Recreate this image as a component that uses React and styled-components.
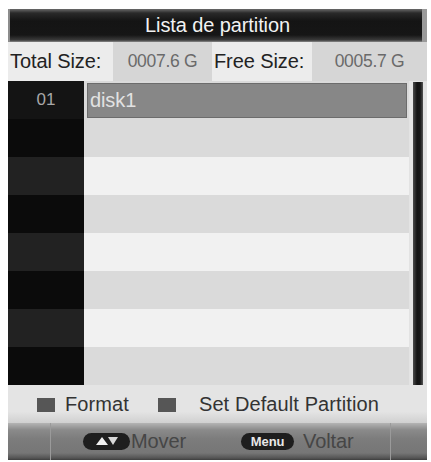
import React from "react";
import styled, { createGlobalStyle } from "styled-components";

const Global = createGlobalStyle`
  html, body { margin: 0; padding: 0; background: #ffffff; }
  body { font-family: "Liberation Sans", Arial, sans-serif; }
`;

const Frame = styled.div`
  margin: 9px 0 0 8px;
  width: 419px;
  background: #e3e3e3;
  display: flex;
  flex-direction: column;
`;

const TitleBar = styled.div`
  height: 33px;
  display: flex;
  align-items: center;
  justify-content: center;
  background: linear-gradient(to bottom, #6a6a6a 0px, #2a2a2a 4px, #141414 12px, #161616 26px, #3a3a3a 31px, #8a8a8a 33px);
  box-shadow: inset 2px 0 0 #8c8c8c, inset -5px 0 0 #9a9a9a;
  color: #f2f2f2;
  font-size: 20px;
  letter-spacing: -0.1px;
`;

const SizeRow = styled.div`
  height: 39px;
  display: grid;
  grid-template-columns: 105px 99px 100px 115px;
`;

const SizeCell = styled.div`
  display: flex;
  align-items: center;
  justify-content: ${(p) => (p.$value ? "center" : "flex-start")};
  padding-left: ${(p) => (p.$value ? "0" : "2px")};
  background: ${(p) => (p.$value ? "#d6d6d6" : "#ececec")};
  color: ${(p) => (p.$value ? "#6a6a6a" : "#222")};
  font-size: ${(p) => (p.$value ? "17.5px" : "20px")};
  letter-spacing: ${(p) => (p.$value ? "-0.3px" : "-0.1px")};
`;

const ListArea = styled.div`
  display: flex;
  height: 304px;
`;

const IndexCol = styled.div`
  width: 76px;
  display: flex;
  flex-direction: column;
`;

const IndexCell = styled.div`
  height: 38px;
  display: flex;
  align-items: center;
  justify-content: center;
  background: ${(p) => p.$bg};
  color: #a8a8a8;
  font-size: 17px;
`;

const RowsCol = styled.div`
  width: 325px;
  display: flex;
  flex-direction: column;
`;

const Row = styled.div`
  height: 38px;
  box-sizing: border-box;
  background: ${(p) => p.$bg};
  padding: 2px 2px 1px 3px;
  display: flex;
`;

const Selected = styled.div`
  flex: 1;
  background: #878787;
  border: 1px solid #6c6c6c;
  display: flex;
  align-items: center;
  padding-left: 2px;
  color: #e2e2e2;
  font-size: 20px;
  letter-spacing: -0.1px;
`;

const ScrollTrack = styled.div`
  width: 18px;
  display: flex;
  justify-content: center;
  padding-top: 1px;
  box-sizing: border-box;
`;

const ScrollBar = styled.div`
  width: 10px;
  background: linear-gradient(to right, #4a4a4a, #121212 40%, #151515 70%, #555);
`;

const Legend = styled.div`
  height: 38px;
  display: flex;
  align-items: center;
  padding-left: 29px;
  color: #333;
  font-size: 20px;
  letter-spacing: 0.1px;
  background: linear-gradient(to bottom, #e4e4e4 0%, #e4e4e4 70%, #d0d0d0 100%);
`;

const LegendSquare = styled.span`
  width: 18px;
  height: 14px;
  background: #565656;
  margin-right: ${(p) => p.$gap}px;
  margin-top: 1px;
`;

const LegendText = styled.span`
  margin-right: ${(p) => p.$gap || 0}px;
`;

const BottomBar = styled.div`
  height: 37px;
  display: flex;
  background: linear-gradient(to bottom, #b4b4b4 0px, #8a8a8a 7px, #7c7c7c 16px, #767676 30px, #555 35px, #3e3e3e 37px);
`;

const BarEdge = styled.div`
  width: ${(p) => p.$w}px;
  border-${(p) => p.$side}: 1px solid #9a9a9a;
`;

const BarMiddle = styled.div`
  flex: 1;
  display: flex;
  align-items: center;
  padding-left: 32px;
  padding-bottom: 1px;
  color: #464646;
  font-size: 20px;
  letter-spacing: -0.1px;
`;

const Pill = styled.span`
  height: 17px;
  width: ${(p) => p.$w}px;
  border-radius: 9px;
  background: #1e1e1e;
  display: inline-flex;
  align-items: center;
  justify-content: center;
  color: #e8e8e8;
  font-size: 13px;
  font-weight: bold;
  margin-right: ${(p) => p.$gap}px;
`;

const BarText = styled.span`
  margin-right: ${(p) => p.$gap || 0}px;
`;

const Arrows = () => (
  <svg width="26" height="12" viewBox="0 0 26 12">
    <polygon points="2,10 8,2 14,10" fill="#f0f0f0" />
    <polygon points="14,2 24,2 19,10" fill="#d8d8d8" />
  </svg>
);

const indexBg = ["#141414", "#0b0b0b", "#222", "#0b0b0b", "#222", "#0b0b0b", "#222", "#0b0b0b"];
const rowBg = ["#dadada", "#dadada", "#f1f1f1", "#dadada", "#f1f1f1", "#dadada", "#f1f1f1", "#dadada"];

export default function App() {
  return (
    <>
      <Global />
      <Frame>
        <TitleBar>Lista de partition</TitleBar>
        <SizeRow>
          <SizeCell>Total Size:</SizeCell>
          <SizeCell $value>0007.6 G</SizeCell>
          <SizeCell>Free Size:</SizeCell>
          <SizeCell $value>0005.7 G</SizeCell>
        </SizeRow>
        <ListArea>
          <IndexCol>
            {indexBg.map((bg, i) => (
              <IndexCell key={i} $bg={bg}>{i === 0 ? "01" : ""}</IndexCell>
            ))}
          </IndexCol>
          <RowsCol>
            {rowBg.map((bg, i) => (
              <Row key={i} $bg={bg}>
                {i === 0 && <Selected>disk1</Selected>}
              </Row>
            ))}
          </RowsCol>
          <ScrollTrack>
            <ScrollBar />
          </ScrollTrack>
        </ListArea>
        <Legend>
          <LegendSquare $gap={10} />
          <LegendText $gap={29}>Format</LegendText>
          <LegendSquare $gap={23} />
          <LegendText>Set Default Partition</LegendText>
        </Legend>
        <BottomBar>
          <BarEdge $w={42} $side="right" />
          <BarMiddle>
            <Pill $w={47} $gap={1}><Arrows /></Pill>
            <BarText $gap={55}>Mover</BarText>
            <Pill $w={53} $gap={9}>Menu</Pill>
            <BarText>Voltar</BarText>
          </BarMiddle>
          <BarEdge $w={36} $side="left" />
        </BottomBar>
      </Frame>
    </>
  );
}
